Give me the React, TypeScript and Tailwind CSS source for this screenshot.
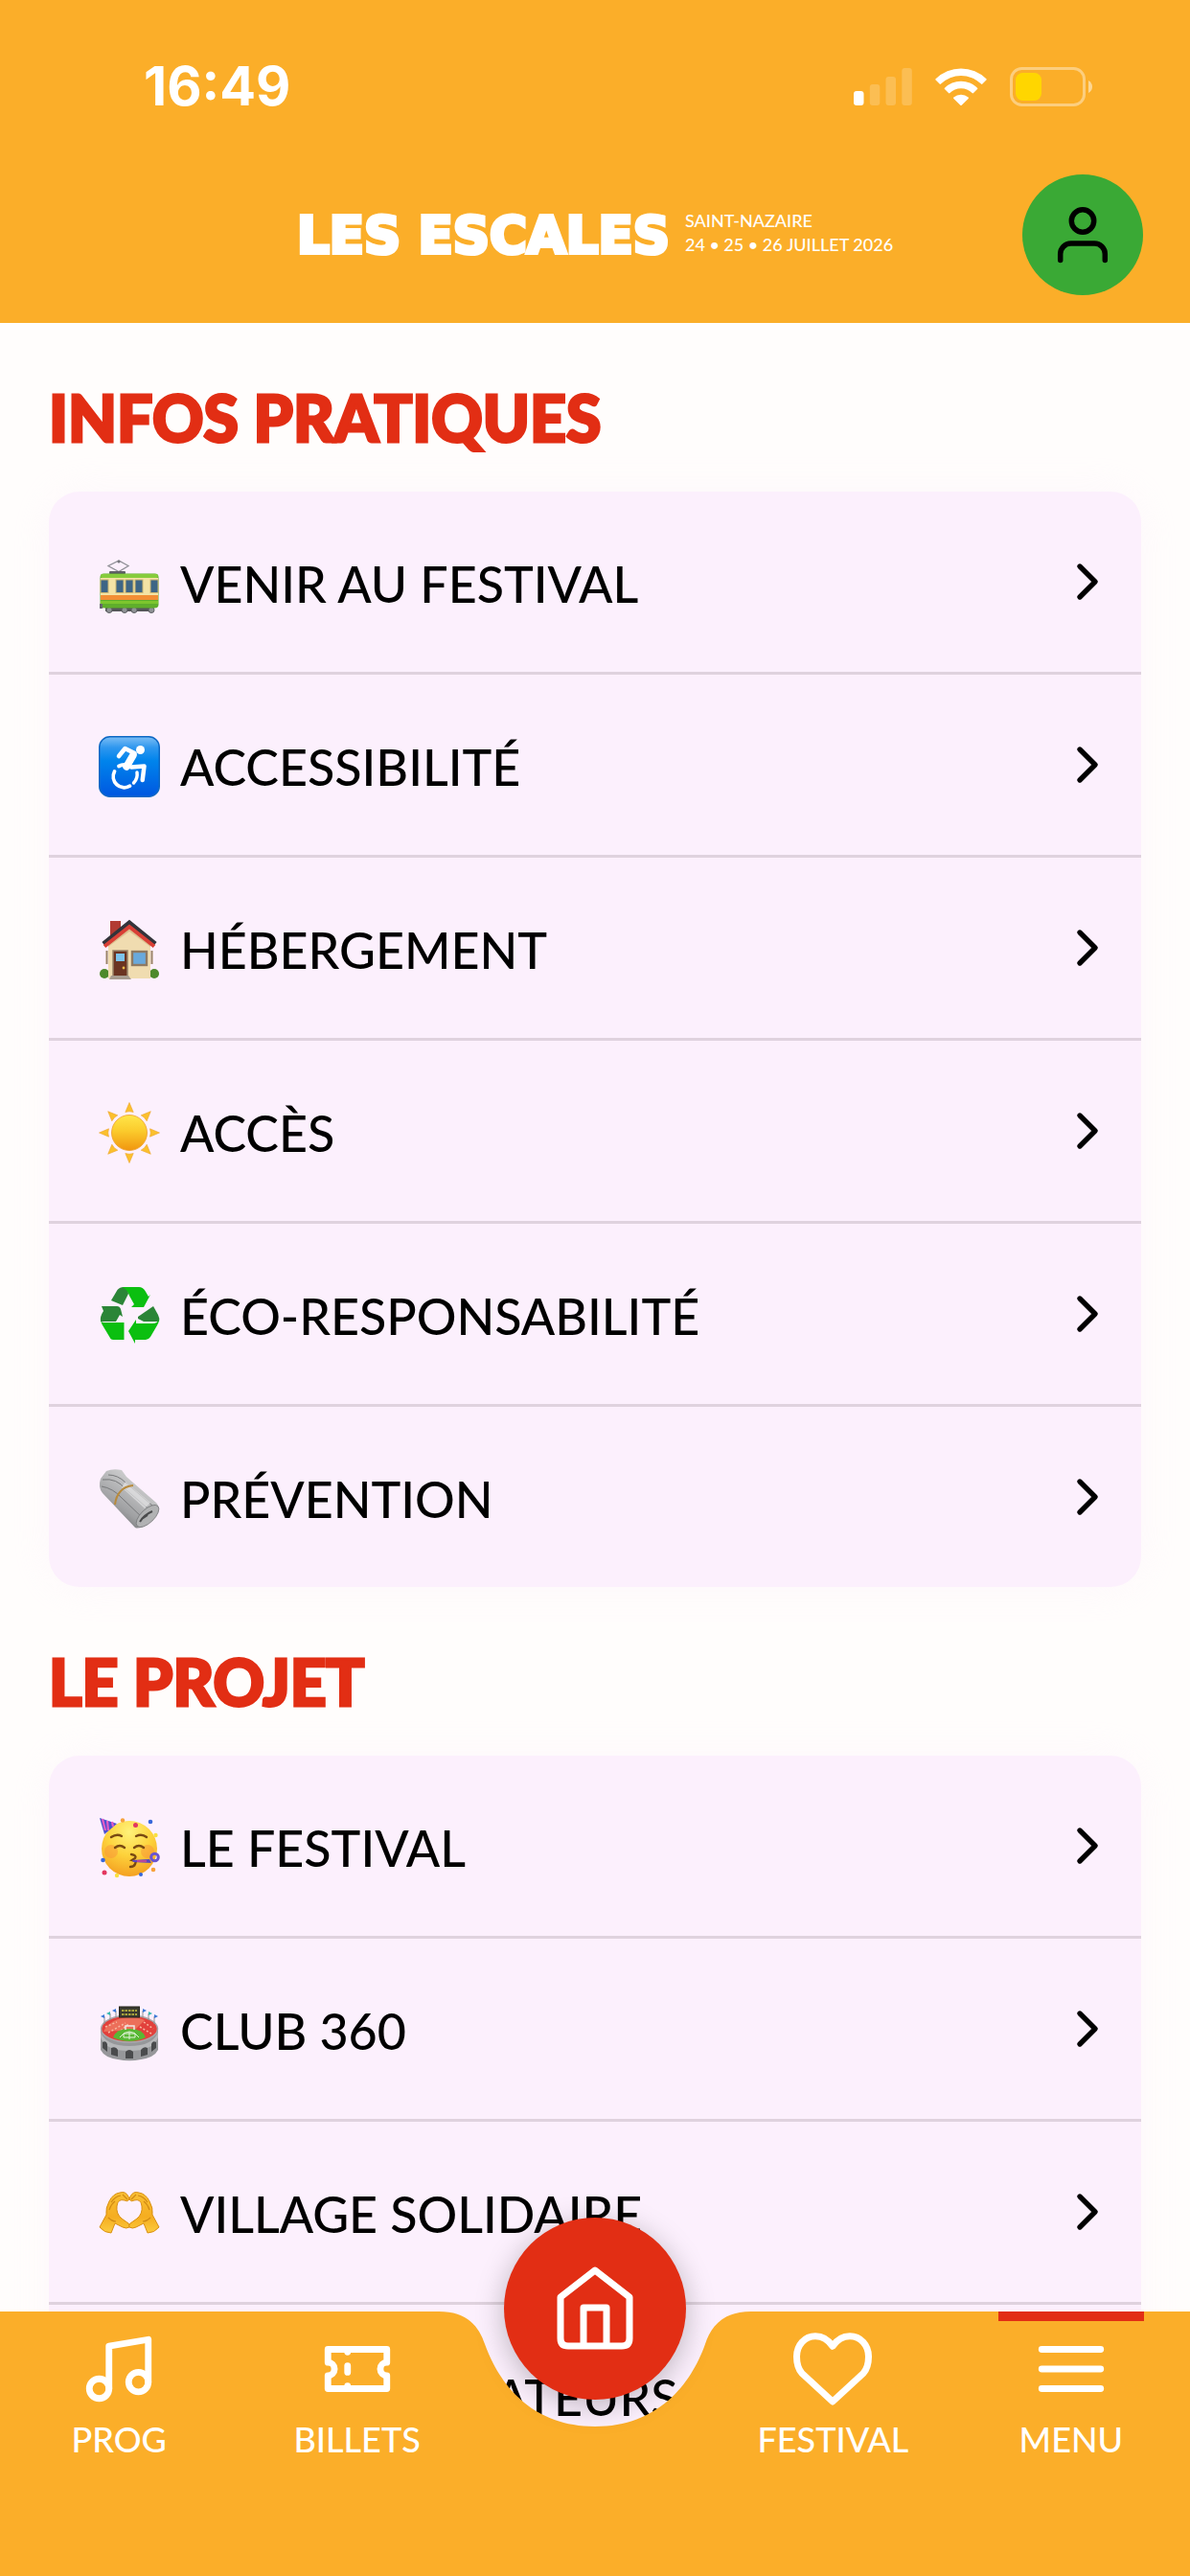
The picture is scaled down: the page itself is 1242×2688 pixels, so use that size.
import type { ReactNode } from 'react';
import { ChevronRight, Music } from 'lucide-react';

type Item = { label: string; icon: ReactNode };

const emojiProps = { viewBox: '0 0 64 64', className: 'size-16 shrink-0 overflow-visible', 'aria-hidden': true };

function Tram() {
    return (
        <svg {...emojiProps}>
            <g transform="translate(0 8)">
                <path d="M20 12L10 6.500l11-5.500 10 5.500-10 6z" fill="none" stroke="#8f8f96" strokeWidth="1.300" transform="translate(0 -1)" />
                <circle cx="21" cy="1" r="1.500" fill="#77777d" />
                <rect x="11" y="11" width="17" height="3" rx="1" fill="#5f6066" />
                <rect x="7" y="49" width="50" height="4" fill="#55565a" />
                <g fill="#8f9296" stroke="#5c5e62" strokeWidth="1">
                    <circle cx="11" cy="51.500" r="3" />
                    <circle cx="27" cy="51.500" r="3" />
                    <circle cx="37" cy="51.500" r="3" />
                    <circle cx="55" cy="51.500" r="3" />
                </g>
                <rect x="1.500" y="13.500" width="61" height="36" rx="4" fill="#5fae2b" />
                <rect x="2" y="18" width="60" height="22" fill="#f3e3a5" />
                <rect x="2" y="14" width="60" height="4" rx="2" fill="#86cc3c" />
                <rect x="2" y="36" width="60" height="5" fill="#f28f35" />
                <rect x="2" y="42" width="60" height="3" fill="#7cc62e" />
                <g fill="#3d6585" stroke="#c9b674" strokeWidth="1">
                    <rect x="2" y="20" width="8" height="13.500" />
                    <rect x="18" y="20" width="8" height="13.500" />
                    <rect x="28" y="20" width="8" height="13.500" />
                    <rect x="38" y="20" width="8" height="13.500" />
                    <rect x="54" y="20" width="8" height="13.500" />
                </g>
                <path d="M1 45h3v5H1z" fill="#66686c" />
            </g>
        </svg>
    );
}

function Wheelchair() {
    return (
        <svg {...emojiProps}>
            <defs>
                <linearGradient id="wheelchair-bg" x1="0" y1="0" x2="0" y2="1">
                    <stop offset="0" stopColor="#7dbff5" />
                    <stop offset=".18" stopColor="#2f97ef" />
                    <stop offset=".4" stopColor="#0084ec" />
                    <stop offset="1" stopColor="#0057e0" />
                </linearGradient>
            </defs>
            <rect x=".750" y=".750" width="62.500" height="62.500" rx="11" fill="url(#wheelchair-bg)" stroke="#0c68c4" strokeWidth="1.500" />
            <circle cx="43.500" cy="14.500" r="4.500" fill="#fff" />
            <g fill="none" stroke="#fff" strokeLinecap="round" strokeLinejoin="round">
                <path d="M21 21l6.500-8 10 5-7.500 12.500" strokeWidth="4.500" />
                <path d="M36 20l-7 12" strokeWidth="7.500" />
                <path d="M34 32.500l13.500-1-1.800 14.500" strokeWidth="4.500" />
                <path d="M40 38a13 13 0 0 1-3.500 11" strokeWidth="3.500" />
                <path d="M32.500 52.200A11.500 11.500 0 0 1 16.500 37" strokeWidth="3.800" />
                <path d="M21 31.500a11.500 11.500 0 0 1 6-1.500" strokeWidth="3.800" />
            </g>
        </svg>
    );
}

function House() {
    return (
        <svg {...emojiProps}>
            <rect x="12" y="2" width="11" height="20" fill="#b23a32" />
            <circle cx="6" cy="57" r="5" fill="#4d8a2b" />
            <circle cx="58" cy="57" r="5" fill="#4d8a2b" />
            <path d="M10 24L32 7l22 17v38H10z" fill="#f0dcb0" />
            <path d="M10 24L32 7l22 17v5L32 13 10 29z" fill="#dcc190" />
            <path d="M5 26L32 4l27 22" fill="none" stroke="#33343a" strokeWidth="5" />
            <path d="M6 28.500L32 8l26 20.500" fill="none" stroke="#d94036" strokeWidth="4" />
            <rect x="15" y="33" width="15" height="27" fill="#6b3422" stroke="#9a8468" strokeWidth="1.500" />
            <rect x="18" y="36" width="9" height="8" fill="#7cc3ec" />
            <circle cx="26" cy="51" r="1.400" fill="#e9b949" />
            <rect x="35" y="34" width="15" height="14" fill="#69a9dc" stroke="#8f7a62" strokeWidth="2.400" />
            <path d="M8.500 33v14M55.500 33v14" stroke="#9b8467" strokeWidth="2" />
            <path d="M13 59h18l3 4H11z" fill="#a79c90" />
        </svg>
    );
}

function Sun() {
    return (
        <svg {...emojiProps}>
            <defs>
                <linearGradient id="sun-core" x1="0" y1="0" x2="0" y2="1">
                    <stop offset="0" stopColor="#ffe64a" />
                    <stop offset=".45" stopColor="#fbcb2c" />
                    <stop offset="1" stopColor="#f1960f" />
                </linearGradient>
            </defs>
            {[0, 45, 90, 135, 180, 225, 270, 315].map((angle) => (
                <path key={angle} d="M32 .500l4.200 10q-4.200-1.500-8.400 0z" fill="#fbc02d" stroke="#eda52b" strokeWidth=".6" transform={`rotate(${angle} 32 32)`} />
            ))}
            <circle cx="32" cy="32" r="18.500" fill="url(#sun-core)" stroke="#eda02a" strokeWidth=".8" />
        </svg>
    );
}

function Recycle() {
    return (
        <svg {...emojiProps}>
            <path d="M13 16l6.500-11Q22 2 26 2q5 2 5 7l-6 12z" fill="#2b8537" />
            <path d="M24 2h18q4 0 6.500 4l3.500 6 2-2-7 13H34l3-3-5-9q-2-7-8-9z" fill="#0bbf10" />
            <path d="M3 22h16q3 0 4 3l2 8-3-2-4 7H2q-1-5 3-11z" fill="#2b8537" />
            <path d="M1.500 36l2 5 9 15q1 1 3 1h11V39H6q-4 0-4.500-3z" fill="#0bbf10" />
            <path d="M41 33l16-11 5 9q2 4 1 7H47l-6-3z" fill="#2b8537" />
            <path d="M63 35q0 4-2 7l-7 12q-2 3-5 3H38v4L31 48l8-12v4h17q6 0 7-5z" fill="#0bbf10" />
        </svg>
    );
}

function Newspaper() {
    return (
        <svg {...emojiProps}>
            <defs>
                <linearGradient id="paper-roll" x1="0" y1="1" x2=".7" y2="0">
                    <stop offset="0" stopColor="#4f5052" />
                    <stop offset=".4" stopColor="#9fa0a2" />
                    <stop offset="1" stopColor="#dcdcdd" />
                </linearGradient>
            </defs>
            <path d="M2 11L8 3q7-3 16-1l5 7 31 27q4 4 1 8L50 59q-8 5-12 3L4 26q-5-6-2-15z" fill="url(#paper-roll)" />
            <path d="M4 12q15-2 24 10l28 24M3 19q12 2 21 12l23 22M10 7q10 0 18 8l28 24" fill="none" stroke="#77787a" strokeWidth="1" />
            <path d="M28 14l26 22-6 6-24-22z" fill="#e4e4e5" opacity=".7" />
            <ellipse cx="51" cy="50" rx="15" ry="7" transform="rotate(-44 51 50)" fill="#b1b2b3" stroke="#77787a" strokeWidth=".8" />
            <path d="M43 56q4-7 13-11M45 53l6-4" fill="none" stroke="#4a4b4c" strokeWidth="2" />
            <path d="M36 18q-9 1-13 6-5 5-6 14" fill="none" stroke="#b98a3c" strokeWidth="2" />
        </svg>
    );
}

function PartyFace() {
    return (
        <svg {...emojiProps}>
            <defs>
                <radialGradient id="party-face" cx=".5" cy=".2" r=".85">
                    <stop offset="0" stopColor="#fff27a" />
                    <stop offset=".5" stopColor="#fdd23b" />
                    <stop offset="1" stopColor="#f39a1e" />
                </radialGradient>
            </defs>
            <circle cx="32" cy="33" r="29" fill="url(#party-face)" />
            <circle cx="13" cy="36" r="7" fill="#f98d3a" opacity=".45" />
            <circle cx="51" cy="36" r="7" fill="#f98d3a" opacity=".45" />
            <path d="M1 1l18 6-13 11z" fill="#4a4fd0" />
            <path d="M4 2l3 12M9 4l1 10M14 5l1 5" stroke="#e15cc4" strokeWidth="2.200" />
            <g fill="none" stroke="#7a4a12" strokeWidth="2.400" strokeLinecap="round">
                <path d="M13 21q6-4 11-1M39 20q6-3 11 1" />
                <path d="M17 32q5-4 10 0M37 32q5-4 10 0" />
                <path d="M34 39q6 1 4 4l-3 2q5 1 3 4-1 3-5 3" />
            </g>
            <path d="M35 45l18-1 2 4-19-1z" fill="#5a46c0" />
            <circle cx="58.500" cy="42" r="3.800" fill="none" stroke="#6a54cf" strokeWidth="3" />
            <path d="M40 46h10" stroke="#d94a90" strokeWidth="1.500" />
            <g fill="#e3365f">
                <circle cx="38.500" cy="8.500" r="2.500" />
                <circle cx="6" cy="58" r="2.500" />
            </g>
            <g fill="#3767da">
                <circle cx="54" cy="5" r="2.300" />
                <circle cx="4.500" cy="45" r="2.300" />
                <circle cx="44" cy="60" r="2" />
            </g>
            <g fill="#f7a23b">
                <circle cx="25" cy="3.500" r="2.200" />
                <circle cx="57" cy="55" r="2.300" />
            </g>
            <g fill="#f9e040">
                <circle cx="59.500" cy="19" r="2.200" />
                <circle cx="19" cy="61" r="2.200" />
            </g>
        </svg>
    );
}

function Stadium() {
    return (
        <svg {...emojiProps}>
            <g transform="translate(0 4)">
                <path d="M2 27v21q4 8 18 10 12 2.500 24 0 14-2 18-10V27z" fill="#96979a" />
                <path d="M2 29q5 15 30 15t30-15v6q-5 14-30 14T2 35z" fill="#b6b7b9" />
                <ellipse cx="32" cy="26" rx="29.500" ry="14" fill="#e2413c" stroke="#a9a9ac" strokeWidth="1.500" />
                <path d="M5 29q7-14 27-15 10 0 16 3L38 27z" fill="#ef7b62" opacity=".8" />
                <path d="M7 24l12-5M10 30l18-10M17 33l14-12M47 19l10 7M43 24l12 7" stroke="#f7b7a0" strokeWidth="1.500" strokeDasharray="2 2" />
                <path d="M15 35q3-9 17-9t17 9q-8 4-17 4t-17-4z" fill="#58b834" />
                <path d="M22 35q4-6 10-6t10 6M26 35h12v-4H26zM32 29v8" fill="none" stroke="#e4f4dc" strokeWidth="1" />
                <path d="M28 27v-4h9v4" fill="none" stroke="#f0e9e6" strokeWidth="1.500" />
                <path d="M6 21v-8M12 17v-7M18 14V7M46 14V7M52 17v-7M58 21v-8" stroke="#8f9092" strokeWidth="1" />
                <path d="M6 11l-4 2 4 2zM18 5l-4 2 4 2zM46 5l4 2-4 2zM58 11l4 2-4 2z" fill="#3a78d8" />
                <path d="M12 8l-4 2 4 2zM52 8l4 2-4 2z" fill="#36b8b0" />
                <rect x="21.500" y="3" width="21" height="11" fill="#3a3b2f" stroke="#26271f" />
                <path d="M24 7h16M24 11h16" stroke="#a8a43c" strokeWidth="1.800" strokeDasharray="2.500 1" />
                <path d="M4 40q4-2 5 2v8l-5-4zM13 46q5-2 7 2v7l-7-2zM28 50q4-4 8 0v7h-8zM44 48q3-4 7-2v7l-7 2zM55 42q1-4 5-2v6l-5 4z" fill="#4a4b4d" />
            </g>
        </svg>
    );
}

function HeartHands() {
    return (
        <svg {...emojiProps}>
            <defs>
                <linearGradient id="hand-skin" x1="0" y1="0" x2="0" y2="1">
                    <stop offset="0" stopColor="#f9c033" />
                    <stop offset=".6" stopColor="#f5ad20" />
                    <stop offset="1" stopColor="#fccb3e" />
                </linearGradient>
            </defs>
            {['', 'translate(64 0) scale(-1 1)'].map((side) => (
                <g key={side} transform={side}>
                    <path
                        d="M1 46l7-13q-1-7 3-14 4-8 11-9 6-2 9 4l1 3q-2 3-5 1-7-2-8 6-1 8 5 13l7 5q2 2 1 4-3 2-7 0l-8-4-4 10q-7 0-12-6z"
                        fill="url(#hand-skin)"
                        stroke="#d98f12"
                        strokeWidth="1"
                    />
                    <path d="M13 20q4-6 10-7M11 28q2-6 6-9M10 36q4 4 8 4M25 12l5 5" fill="none" stroke="#d18a14" strokeWidth="1.200" />
                </g>
            ))}
        </svg>
    );
}

const sections: { title: string; items: Item[] }[] = [
    {
        title: 'INFOS PRATIQUES',
        items: [
            { label: 'VENIR AU FESTIVAL', icon: <Tram /> },
            { label: 'ACCESSIBILITÉ', icon: <Wheelchair /> },
            { label: 'HÉBERGEMENT', icon: <House /> },
            { label: 'ACCÈS', icon: <Sun /> },
            { label: 'ÉCO-RESPONSABILITÉ', icon: <Recycle /> },
            { label: 'PRÉVENTION', icon: <Newspaper /> },
        ],
    },
    {
        title: 'LE PROJET',
        items: [
            { label: 'LE FESTIVAL', icon: <PartyFace /> },
            { label: 'CLUB 360', icon: <Stadium /> },
            { label: 'VILLAGE SOLIDAIRE', icon: <HeartHands /> },
            { label: 'LES ORGANISATEURS', icon: <HeartHands /> },
        ],
    },
];

function StatusBar() {
    return (
        <div className="flex h-[180px] items-center justify-between pr-[102px] pl-[150px]">
            <span className="font-['Inter'] text-[56px] leading-none font-bold">16:49</span>
            <div className="flex items-center gap-6">
                <svg viewBox="0 0 61 39" className="h-[39px] w-[61px]" fill="#fff" aria-hidden="true">
                    <rect x="0" y="24" width="10.500" height="15" rx="3" />
                    <rect x="16.800" y="17" width="10.500" height="22" rx="3" opacity=".2" />
                    <rect x="33.500" y="9" width="10.500" height="30" rx="3" opacity=".2" />
                    <rect x="50.300" y="0" width="10.500" height="39" rx="3" opacity=".2" />
                </svg>
                <svg viewBox="0 0 54 39" className="h-[39px] w-[54px]" fill="#fff" aria-hidden="true">
                    <path d="M.600 11.300a37.500 37.500 0 0 1 52.800 0q.6.700 0 1.300l-4 4q-.7.600-1.400 0a30 30 0 0 0-42 0q-.7.600-1.400 0l-4-4q-.6-.6 0-1.300z" />
                    <path d="M10 20.800a24 24 0 0 1 34 0q.7.700 0 1.300l-4 4q-.7.600-1.400 0a16.500 16.500 0 0 0-23.200 0q-.7.600-1.400 0l-4-4q-.7-.6 0-1.300z" />
                    <path d="M19.400 30.500a11.500 11.500 0 0 1 15.200 0q.7.700 0 1.400l-6.900 6.800q-.7.600-1.400 0l-6.900-6.800q-.7-.7 0-1.400z" />
                </svg>
                <svg viewBox="0 0 86 41" className="h-[41px] w-[86px]" aria-hidden="true">
                    <rect x="1.500" y="1.500" width="76" height="38" rx="11" fill="none" stroke="#fff" strokeOpacity=".4" strokeWidth="3" />
                    <rect x="6" y="6" width="27" height="29" rx="7.500" fill="#ffd600" />
                    <path d="M82 14q4 2.500 4 6.500T82 27z" fill="#fff" fillOpacity=".5" />
                </svg>
            </div>
        </div>
    );
}

function Header() {
    return (
        <header className="shrink-0 bg-[#fbae29] pb-[27px] text-white">
            <StatusBar />
            <div className="grid h-[130px] grid-cols-[1fr_auto_1fr] items-center px-[49px]">
                <a href="#accueil" className="col-start-2 flex items-center gap-4">
                    <span className="font-['DejaVu_Sans'] text-[53px] leading-none font-bold [-webkit-text-stroke:4px_white]">LES ESCALES</span>
                    <span className="flex flex-col pb-1 font-['Lato'] text-[18px] leading-[25px] font-medium">
                        <span>SAINT-NAZAIRE</span>
                        <span>24 • 25 • 26 JUILLET 2026</span>
                    </span>
                </a>
                <button type="button" aria-label="Mon compte" className="flex size-[126px] items-center justify-center justify-self-end rounded-full bg-[#3aa935]">
                    <svg viewBox="0 0 80 80" className="size-20" fill="none" stroke="#000" strokeWidth="5.500" strokeLinecap="round" aria-hidden="true">
                        <circle cx="40" cy="25.500" r="11.700" />
                        <path d="M16.700 66.500V60a11 11 0 0 1 11-11h24.600a11 11 0 0 1 11 11v6.500" />
                    </svg>
                </button>
            </div>
        </header>
    );
}

function MenuRow({ label, icon }: Item) {
    return (
        <li>
            <a href="#" className="flex h-[188px] items-center pr-6 pl-[52px] text-black">
                <span className="flex flex-1 items-center gap-[21px] pt-1">
                    {icon}
                    <span className="text-[52px] leading-[60px] font-medium">{label}</span>
                </span>
                <ChevronRight className="size-16" aria-hidden="true" />
            </a>
        </li>
    );
}

function NavItem({ label, active, children }: { label: string; active?: boolean; children: ReactNode }) {
    return (
        <a href="#" className="relative flex flex-col items-center pt-[19px] text-[36px] leading-[44px] font-medium" aria-current={active ? 'page' : undefined}>
            {active && <span className="absolute top-0 h-[10px] w-[152px] bg-[#e22e14]" />}
            {children}
            <span className="mt-2.5">{label}</span>
        </a>
    );
}

function BottomNav() {
    return (
        <nav className="absolute inset-x-0 bottom-0 h-[276px] text-white">
            {/* bar background, with the notch kept centred under the home button */}
            <div className="absolute inset-0 flex">
                <div className="flex-1 bg-[#fbae29]" />
                <svg viewBox="0 0 326 276" className="h-[276px] w-[326px]" aria-hidden="true">
                    <path d="M0 0C30 0 42 16 48 34C63 76 97 120 163 120S263 76 278 34C284 16 296 0 326 0V276H0z" fill="#fbae29" />
                </svg>
                <div className="flex-1 bg-[#fbae29]" />
            </div>
            <div className="relative grid grid-cols-5">
                <NavItem label="PROG">
                    <Music className="size-[82px]" aria-hidden="true" />
                </NavItem>
                <NavItem label="BILLETS">
                    <svg viewBox="0 0 24 24" className="size-[82px]" fill="none" stroke="currentColor" strokeWidth="2" strokeLinecap="round" strokeLinejoin="round" aria-hidden="true">
                        <path d="M3 6h18v4a2 2 0 0 0 0 4v4H3v-4a2 2 0 0 0 0-4z" />
                        <path d="M9 6v.8M9 11v2M9 17.200v.8" />
                    </svg>
                </NavItem>
                <div className="relative flex justify-center">
                    <a href="#accueil" aria-label="Accueil" className="absolute -top-[98px] flex size-[190px] items-center justify-center rounded-full bg-[#e22e14] shadow-[0_6px_30px_rgba(0,0,0,0.25)]">
                        <svg viewBox="0 0 90 90" className="size-[90px]" fill="none" stroke="currentColor" strokeWidth="7" strokeLinecap="round" strokeLinejoin="round" aria-hidden="true">
                            <path d="M9 33L45 5l36 28v43q0 8-8 8H17q-8 0-8-8z" />
                            <path d="M33 83V44h24v39" />
                        </svg>
                    </a>
                </div>
                <NavItem label="FESTIVAL">
                    <svg viewBox="0 0 82 82" className="size-[82px] overflow-visible" fill="none" stroke="currentColor" strokeWidth="7" strokeLinejoin="round" aria-hidden="true">
                        <path d="M41 75L9 45.500C5 41 3.500 35 3.500 28 3.500 16 12 6.700 23 6.700c7.500 0 13.500 3.800 18 10.500 4.500-6.700 10.500-10.500 18-10.500 11 0 19.500 9.300 19.500 21.300 0 7-1.500 13-5.500 17.500z" />
                    </svg>
                </NavItem>
                <NavItem label="MENU" active>
                    <svg viewBox="0 0 24 24" className="size-[82px]" fill="none" stroke="currentColor" strokeWidth="2" strokeLinecap="round" aria-hidden="true">
                        <path d="M3 6h18M3 12h18M3 18h18" />
                    </svg>
                </NavItem>
            </div>
        </nav>
    );
}

export default function App() {
    return (
        <div className="relative flex h-screen flex-col overflow-hidden bg-[#fffdfc] font-['Lato',sans-serif]">
            <Header />
            <main className="min-h-0 flex-1 overflow-y-auto px-[51px] pb-[276px] [scrollbar-width:none]">
                {sections.map((section) => (
                    <section key={section.title} className="pt-[59px]">
                        <h2 className="text-[66px] leading-[80px] font-black text-[#e22e14] [-webkit-text-stroke:3px_#e22e14]">{section.title}</h2>
                        <ul className="mt-[37px] divide-y-[3px] divide-[#dfd2de] rounded-[32px] bg-[#fcf0fd] shadow-[0_0_45px_rgba(251,239,253,0.4)]">
                            {section.items.map((item) => (
                                <MenuRow key={item.label} {...item} />
                            ))}
                        </ul>
                    </section>
                ))}
            </main>
            <BottomNav />
        </div>
    );
}
